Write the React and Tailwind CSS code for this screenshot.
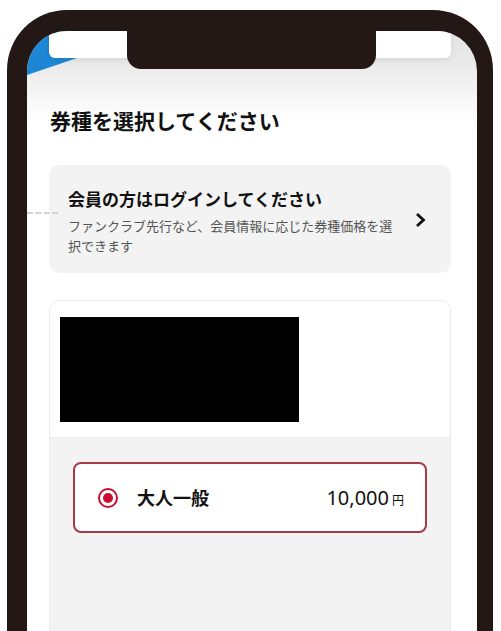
const jp = { fontFamily: '"Noto Sans CJK JP", "Noto Sans", sans-serif' };

const Radio = () => (
  <span className="w-[20px] h-[20px] rounded-full border-2 border-[#c8102e] flex items-center justify-center shrink-0">
    <span className="w-[10px] h-[10px] rounded-full bg-[#c8102e]" />
  </span>
);

export default function App() {
  return (
    <div className="w-[501px] h-[631px] overflow-hidden bg-white pt-[10px] pl-[7px]" style={jp}>
      <div className="w-[486px] h-[700px] rounded-t-[60px] bg-[#231815] pt-[21px] pl-[20px] pr-[16px] flex">
        <div className="relative flex-1 rounded-t-[40px] overflow-hidden bg-[linear-gradient(to_bottom,#e4e4e4_0px,#e8e8e8_28px,#ffffff_90px)]">
          {/* blue corner */}
          <svg className="absolute left-0 top-0" width="70" height="50" viewBox="0 0 70 50">
            <polygon points="0,0 60,0 53,26 0,44" fill="#1d87d6" />
          </svg>

          {/* notch */}
          <div className="absolute left-[100px] top-0 w-[249px] h-[38px] bg-[#231815] rounded-b-[14px] z-20" />

          {/* dashed line */}
          <div className="absolute left-0 top-[181px] w-[31px] border-t-2 border-dashed border-[#d4d4d4] z-10" />

          <div className="ml-[22px] mr-[26px] h-[27px] bg-white rounded-b-[6px] shadow-[0_2px_6px_rgba(0,0,0,0.08)] relative" />

          <div className="pl-[22px] pr-[26px]">
            <h1 className="mt-[52px] text-[21px] leading-[21px] font-bold text-[#111] pl-px">券種を選択してください</h1>

            <div className="mt-[34px] h-[108px] rounded-[10px] bg-[#f3f3f3] pl-[19px] pt-[25px] flex">
              <div className="w-[330px]">
                <p className="text-[17px] leading-[17px] font-bold text-[#111]">会員の方はログインしてください</p>
                <p className="mt-[9px] text-[13px] leading-[20px] text-[#555] whitespace-nowrap">
                  ファンクラブ先行など、会員情報に応じた券種価格を選<br />択できます
                </p>
              </div>
              <div className="flex-1 flex justify-center pt-[22px] pr-[8px]">
                <svg width="11" height="16" viewBox="0 0 11 16">
                  <polyline points="2,2 8.5,8 2,14" fill="none" stroke="#111" strokeWidth="2.8" strokeLinejoin="miter" />
                </svg>
              </div>
            </div>

            <div className="mt-[27px] rounded-t-[10px] border border-[#ebebeb] overflow-hidden">
              <div className="bg-white pt-[16px] pb-[15px] pl-[10px]">
                <div className="w-[239px] h-[105px] bg-black" />
              </div>
              <div className="border-t border-[#ebebeb] bg-[#f3f3f3] px-[23px] pt-[24px] h-[220px]">
                <div className="h-[71px] rounded-[8px] border-2 border-[#a63a48] bg-white flex items-center pl-[23px] pr-[21px]">
                  <Radio />
                  <span className="ml-[19px] text-[18px] font-bold text-[#111]">大人一般</span>
                  <span className="ml-auto flex items-baseline text-[#111]">
                    <span className="text-[20px]" style={{ fontFamily: '"Noto Sans", sans-serif' }}>10,000</span>
                    <span className="ml-[3px] text-[12px]">円</span>
                  </span>
                </div>
              </div>
            </div>
          </div>
        </div>
      </div>
    </div>
  );
}
